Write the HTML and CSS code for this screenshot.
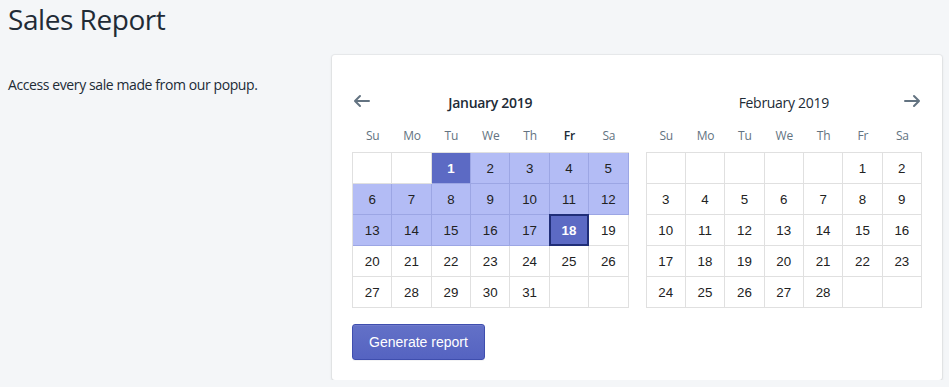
FILE: index.html
```html
<!DOCTYPE html>
<html lang="en">
<head>
<meta charset="utf-8">
<title>Sales Report</title>
<link rel="stylesheet" href="styles.css">
</head>
<body>
<div class="page">
  <h1 class="page-title">Sales Report</h1>
  <div class="section">
    <div class="annotation">
      <p class="annotation-text">Access every sale made from our popup.</p>
    </div>
    <div class="card">
      <div class="months">
        <div class="month">
          <div class="month-header">
            <button class="nav-btn" aria-label="Previous month">
              <svg viewBox="0 0 20 20" class="nav-icon"><path d="M17 9H5.414l3.293-3.293a.999.999 0 1 0-1.414-1.414l-5 5a.999.999 0 0 0 0 1.414l5 5a.997.997 0 0 0 1.414 0 .999.999 0 0 0 0-1.414L5.414 11H17a1 1 0 1 0 0-2z"/></svg>
            </button>
            <div class="month-title current">January 2019</div>
            <div class="nav-spacer"></div>
          </div>
          <div class="weekdays">
            <span>Su</span><span>Mo</span><span>Tu</span><span>We</span><span>Th</span><span class="today">Fr</span><span>Sa</span>
          </div>
          <div class="grid">
            <div class="day empty"></div><div class="day empty"></div><div class="day sel">1</div><div class="day range">2</div><div class="day range">3</div><div class="day range">4</div><div class="day range">5</div>
            <div class="day range">6</div><div class="day range">7</div><div class="day range">8</div><div class="day range">9</div><div class="day range">10</div><div class="day range">11</div><div class="day range">12</div>
            <div class="day range">13</div><div class="day range">14</div><div class="day range">15</div><div class="day range">16</div><div class="day range">17</div><div class="day sel end">18</div><div class="day">19</div>
            <div class="day">20</div><div class="day">21</div><div class="day">22</div><div class="day">23</div><div class="day">24</div><div class="day">25</div><div class="day">26</div>
            <div class="day">27</div><div class="day">28</div><div class="day">29</div><div class="day">30</div><div class="day">31</div><div class="day empty"></div><div class="day empty"></div>
          </div>
        </div>
        <div class="month">
          <div class="month-header">
            <div class="nav-spacer"></div>
            <div class="month-title">February 2019</div>
            <button class="nav-btn" aria-label="Next month">
              <svg viewBox="0 0 20 20" class="nav-icon"><path d="M17.707 9.293l-5-5a.999.999 0 1 0-1.414 1.414L14.586 9H3a1 1 0 1 0 0 2h11.586l-3.293 3.293a.999.999 0 1 0 1.414 1.414l5-5a.999.999 0 0 0 0-1.414z"/></svg>
            </button>
          </div>
          <div class="weekdays">
            <span>Su</span><span>Mo</span><span>Tu</span><span>We</span><span>Th</span><span>Fr</span><span>Sa</span>
          </div>
          <div class="grid">
            <div class="day empty"></div><div class="day empty"></div><div class="day empty"></div><div class="day empty"></div><div class="day empty"></div><div class="day">1</div><div class="day">2</div>
            <div class="day">3</div><div class="day">4</div><div class="day">5</div><div class="day">6</div><div class="day">7</div><div class="day">8</div><div class="day">9</div>
            <div class="day">10</div><div class="day">11</div><div class="day">12</div><div class="day">13</div><div class="day">14</div><div class="day">15</div><div class="day">16</div>
            <div class="day">17</div><div class="day">18</div><div class="day">19</div><div class="day">20</div><div class="day">21</div><div class="day">22</div><div class="day">23</div>
            <div class="day">24</div><div class="day">25</div><div class="day">26</div><div class="day">27</div><div class="day">28</div><div class="day empty"></div><div class="day empty"></div>
          </div>
        </div>
      </div>
      <button class="primary-btn">Generate report</button>
    </div>
  </div>
</div>
</body>
</html>
```

FILE: styles.css
```css
* { box-sizing: border-box; }

body {
  margin: 0;
  background: #f4f6f8;
  color: #212b36;
  font-family: "Open Sans", "Noto Sans", sans-serif;
}

.page {
  padding: 0 7px 0 8px;
}

.page-title {
  margin: 0;
  padding-top: 3px;
  font-size: 28px;
  line-height: 32px;
  font-weight: 400;
  letter-spacing: -0.45px;
}

.section {
  margin-top: 20px;
  display: grid;
  grid-template-columns: 1fr 610px;
  gap: 20px;
  align-items: start;
}

.annotation {
  padding-top: 20px;
}

.annotation-text {
  margin: 0;
  font-size: 14px;
  line-height: 20px;
  letter-spacing: -0.4px;
}

.card {
  background: #fff;
  border-radius: 3px;
  box-shadow: 0 0 0 1px rgba(63, 63, 68, 0.05), 0 1px 3px 0 rgba(63, 63, 68, 0.15);
  padding: 20px;
}

.months {
  display: flex;
  gap: 17px;
}

.month {
  flex: 1 1 0;
}

.month-header {
  margin-top: 16px;
  height: 24px;
  display: flex;
  align-items: center;
}

.nav-btn {
  width: 20px;
  height: 20px;
  padding: 0;
  border: 0;
  background: none;
  margin-top: -4px;
  display: flex;
}

.nav-icon {
  width: 20px;
  height: 20px;
  fill: #637381;
}

.nav-spacer {
  width: 20px;
}

.month-title {
  flex: 1;
  text-align: center;
  font-size: 14px;
  line-height: 20px;
  letter-spacing: -0.3px;
}

.month-title.current {
  font-weight: 600;
}

.weekdays {
  display: grid;
  grid-template-columns: repeat(7, 1fr);
  height: 28px;
  margin-top: 7px;
  padding-left: 1px;
  font-size: 12px;
  line-height: 28px;
  color: #637381;
  text-align: center;
  letter-spacing: -0.2px;
}

.weekdays .today {
  color: #212b36;
  font-weight: 600;
}

.grid {
  margin-top: 2px;
  display: grid;
  grid-template-columns: repeat(7, 1fr);
  grid-auto-rows: 31px;
  border-top: 1px solid #e0e0e0;
  border-left: 1px solid #e0e0e0;
}

.day {
  position: relative;
  border-right: 1px solid #e0e0e0;
  border-bottom: 1px solid #e0e0e0;
  font-family: "Liberation Sans", Arial, sans-serif;
  font-size: 13.333px;
  color: #222;
  display: flex;
  align-items: center;
  justify-content: center;
}

.day.range {
  background: #b3bcf5;
  border-color: #9ca6e4;
}

.day.sel {
  background: #5c6ac4;
  border-color: #9ca6e4;
  color: #fff;
  font-weight: 700;
}

.day.end::after {
  content: "";
  position: absolute;
  top: -1px;
  left: -1px;
  right: -1px;
  bottom: -1px;
  border: 2px solid #202e78;
}

.primary-btn {
  margin-top: 16px;
  height: 36px;
  padding: 0 16px;
  font-family: "Liberation Sans", Arial, sans-serif;
  font-size: 14px;
  color: #fff;
  background: linear-gradient(180deg, #6371c7, #5563c1);
  border: 1px solid #3f4eae;
  border-radius: 3px;
  box-shadow: inset 0 1px 0 0 #6f7bcb, 0 1px 0 0 rgba(22, 29, 37, 0.05);
}
```
